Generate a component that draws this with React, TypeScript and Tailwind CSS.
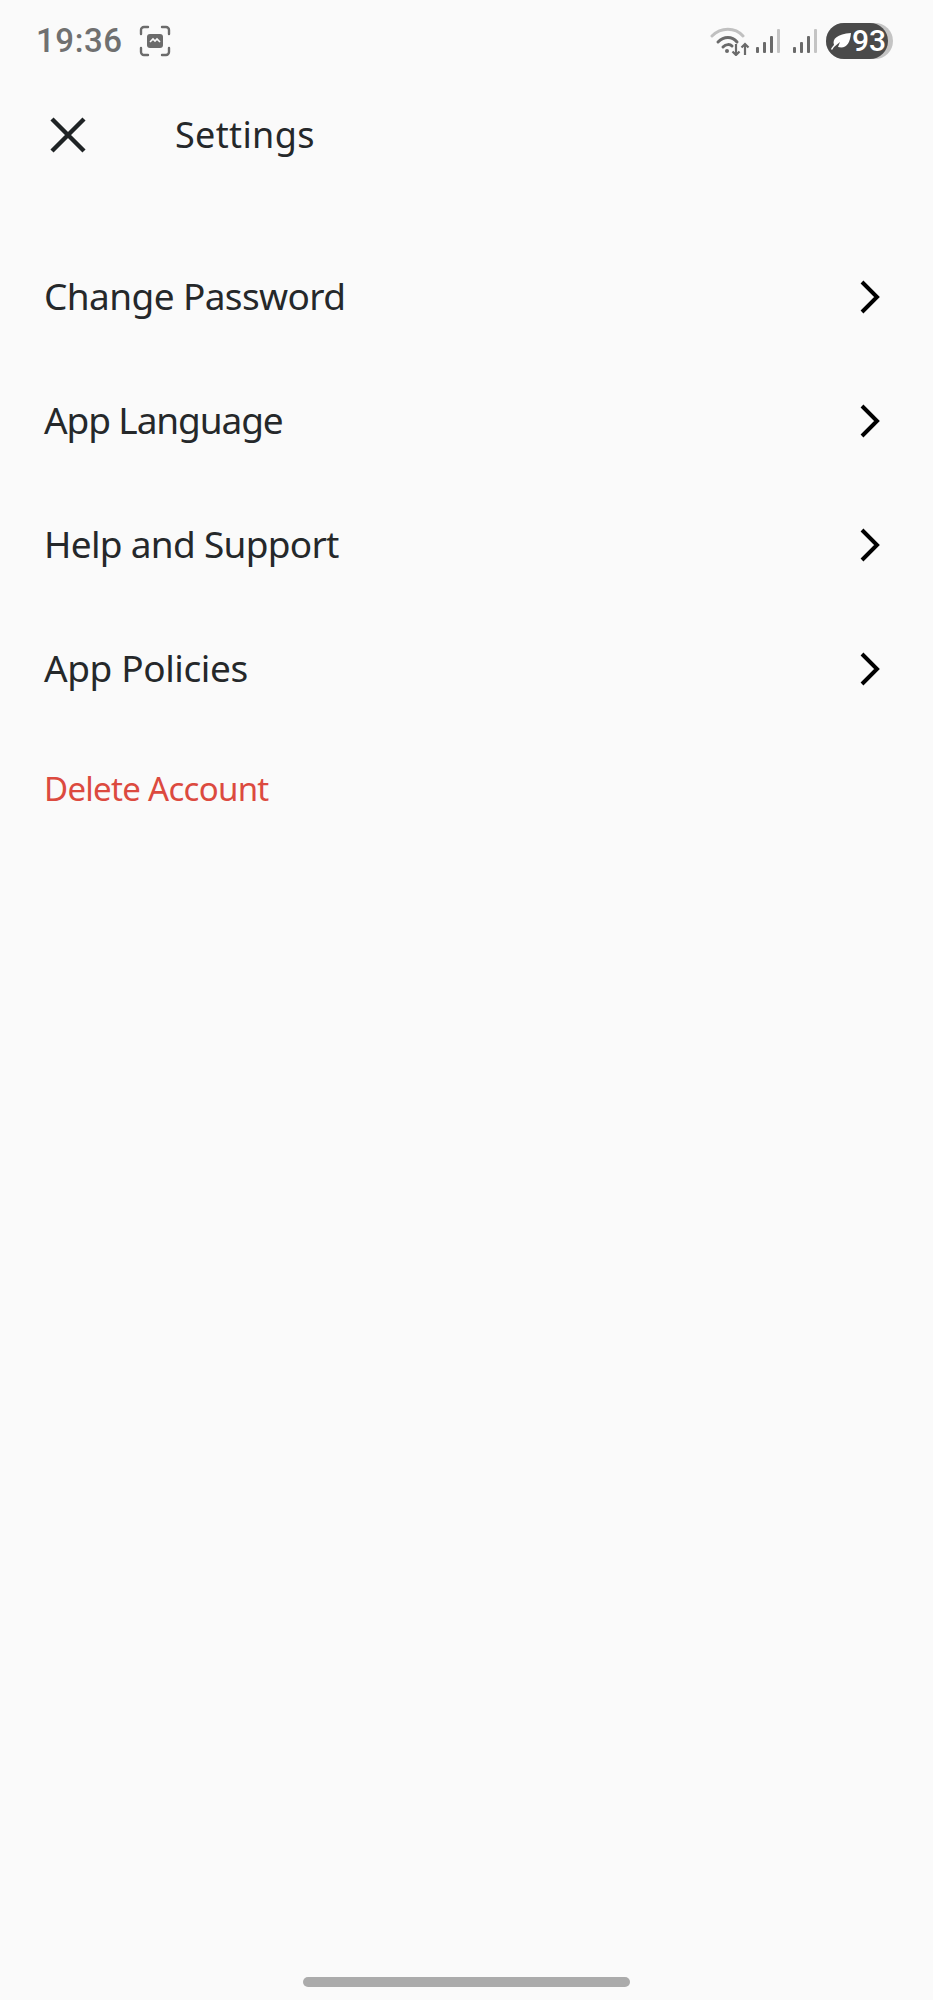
const rows = [
    { label: 'Change Password', spacing: 'tracking-[-0.6px]' },
    { label: 'App Language', spacing: 'tracking-[-1.1px]' },
    { label: 'Help and Support', spacing: 'tracking-[-0.7px]' },
    { label: 'App Policies', spacing: 'tracking-[-0.4px]' },
];

function SignalIcon() {
    return (
        <svg width="26" height="26" viewBox="0 0 26 26" className="shrink-0">
            <rect x="1" y="19" width="3" height="6" rx="1" fill="#6a6a6a" />
            <rect x="8" y="14" width="3" height="11" rx="1" fill="#6a6a6a" />
            <rect x="15" y="8" width="3" height="17" rx="1" fill="#6a6a6a" />
            <rect x="22" y="1" width="3" height="24" rx="1" fill="#c4c4c4" />
        </svg>
    );
}

function StatusBar() {
    return (
        <div className="h-[64px] flex items-center justify-between pl-[36px] pr-[40px] pt-[17px]">
            <div className="flex items-center gap-[16px]">
                <span className="font-['Roboto',sans-serif] text-[33px] leading-none font-medium text-[#707070] tracking-[0.6px]">
                    19:36
                </span>
                <svg width="32" height="32" viewBox="0 0 32 32" fill="none">
                    <path
                        d="M2 9V5a3 3 0 0 1 3-3h4M23 2h4a3 3 0 0 1 3 3v4M30 23v4a3 3 0 0 1-3 3h-4M9 30H5a3 3 0 0 1-3-3v-4"
                        stroke="#6b6b6b"
                        strokeWidth="2.4"
                        strokeLinecap="round"
                    />
                    <rect x="8" y="9" width="16" height="14" rx="3" fill="#6b6b6b" />
                    <path d="M11 17l3-3 2 2 2-2 3 3" stroke="#fafafa" strokeWidth="1.6" fill="none" />
                </svg>
            </div>
            <div className="flex items-center">
                <svg width="40" height="30" viewBox="0 0 40 30" fill="none" className="mr-[5px]">
                    <path d="M2 10C11 1 25 1 33 10" stroke="#c0c0c0" strokeWidth="3" strokeLinecap="round" />
                    <path d="M8 16C14 10 22 10 27 16" stroke="#6a6a6a" strokeWidth="3" strokeLinecap="round" />
                    <path d="M13 21C16 18 20 18 22 20" stroke="#6a6a6a" strokeWidth="3" strokeLinecap="round" />
                    <circle cx="17" cy="25" r="2" fill="#6a6a6a" />
                    <path d="M26 18v11M22.5 25.5l3.5 3.5 3.5-3.5" stroke="#6a6a6a" strokeWidth="2.2" />
                    <path d="M35 29V18M31.5 21.5l3.5-3.5 3.5 3.5" stroke="#6a6a6a" strokeWidth="2.2" />
                </svg>
                <SignalIcon />
                <div className="w-[11px]" />
                <SignalIcon />
                <div className="relative ml-[8px] w-[67px] h-[36px]">
                    <div className="absolute inset-0 rounded-full bg-[#c4c4c4]" />
                    <div className="absolute inset-y-0 left-0 w-[62px] rounded-full bg-[#4a4a4a] flex items-center pl-[4px]">
                        <svg width="22" height="20" viewBox="0 0 22 20" fill="#ffffff" className="shrink-0">
                            <path d="M1 18c1-2 2-3 3-4-2-6 3-11 17-12-1 11-5 16-13 14l2-5-6 5-2 3z" />
                        </svg>
                        <span className="font-['Roboto',sans-serif] text-[30px] leading-none font-medium text-white">
                            93
                        </span>
                    </div>
                </div>
            </div>
        </div>
    );
}

export default function App() {
    return (
        <div className="bg-[#fafafa] h-[2000px] flex flex-col font-['Noto_Sans',sans-serif] overflow-hidden">
            <StatusBar />
            <div className="h-[142px] flex items-center pl-[50px]">
                <svg width="36" height="36" viewBox="0 0 36 36" fill="none" stroke="#1f2325" strokeWidth="4.4">
                    <path d="M2 2l32 32M34 2L2 34" />
                </svg>
                <h1 className="ml-[89px] text-[36px] leading-none text-[#25282a] tracking-[0.35px]">Settings</h1>
            </div>
            <div className="flex flex-col mt-[29px] pl-[44px] pr-[52px]">
                {rows.map((row) => (
                    <div key={row.label} className="h-[124px] flex items-center justify-between">
                        <span className={`text-[37px] leading-none text-[#25282a] pb-[4px] ${row.spacing}`}>
                            {row.label}
                        </span>
                        <svg width="22" height="34" viewBox="0 0 22 34" fill="none" stroke="#000000" strokeWidth="4">
                            <path d="M3 2l15 15L3 32" />
                        </svg>
                    </div>
                ))}
                <div className="mt-[41px] text-[33px] leading-none text-[#dc4a3f] tracking-[-0.7px]">Delete Account</div>
            </div>
            <div className="mt-auto mb-[13px] mx-auto w-[327px] h-[10px] rounded-full bg-[#ababab]" />
        </div>
    );
}
